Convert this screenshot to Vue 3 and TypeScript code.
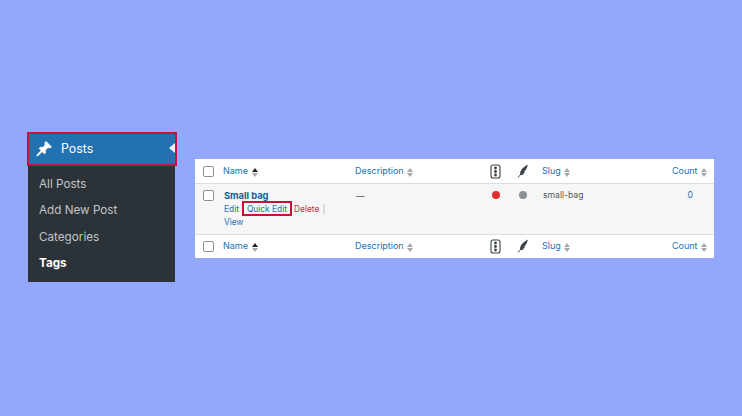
<script setup lang="ts">
const menu = [
  { label: 'All Posts', current: false },
  { label: 'Add New Post', current: false },
  { label: 'Categories', current: false },
  { label: 'Tags', current: true },
]
const headRows = ['top', 'bottom']
</script>

<template>
  <div class="page">
    <aside class="side">
      <div class="posts">
        <svg class="pin" viewBox="0 0 20 20" width="18" height="18">
          <path fill="#fff" d="M10.44 3.02l1.82-1.82 6.36 6.35-1.83 1.82c-1.05-.68-2.48-.57-3.41.36l-.75.75c-.92.93-1.04 2.35-.35 3.41l-1.83 1.82-2.41-2.41-2.8 2.79c-.42.42-3.38 2.71-3.8 2.29s1.86-3.39 2.28-3.81l2.79-2.79L4.1 9.36l1.83-1.82c1.05.69 2.48.57 3.4-.36l.75-.75c.93-.92 1.05-2.35.36-3.41z" />
        </svg>
        <span class="posts-label">Posts</span>
        <span class="notch"></span>
      </div>
      <ul class="sub">
        <li v-for="m in menu" :key="m.label" :class="{ current: m.current }">{{ m.label }}</li>
      </ul>
    </aside>

    <div class="table">
      <template v-for="(h, i) in headRows" :key="h">
        <div class="row head" :class="h">
          <span class="box"></span>
          <span class="col-name link">Name <i class="sort"><b class="up dark"></b><b class="down"></b></i></span>
          <span class="col-desc link">Description <i class="sort"><b class="up"></b><b class="down"></b></i></span>
          <span class="col-light">
            <svg viewBox="0 0 11 15" width="11" height="15">
              <rect x="1" y="1" width="9" height="13" rx="2" fill="none" stroke="#3c4348" stroke-width="1.1" />
              <circle cx="5.5" cy="4" r="1.4" fill="#3c4348" />
              <circle cx="5.5" cy="7.5" r="1.4" fill="#3c4348" />
              <circle cx="5.5" cy="11" r="1.4" fill="#3c4348" />
            </svg>
          </span>
          <span class="col-leaf">
            <svg viewBox="0 0 12 14" width="12" height="14">
              <path fill="#3c4348" d="M10.8.4C8.2 2 5.6 3.6 4.2 6 3.3 7.6 3 9.2 3.1 10.4L.8 13.3l.5.4 2.4-2.8c1.4.1 2.9-.5 3.8-1.5-.6.1-1.2 0-1.7-.2.9-.1 1.8-.6 2.4-1.3-.5 0-1-.1-1.3-.3.8-.3 1.4-.9 1.8-1.6C9.6 4.3 10.6 2.4 10.8.4z" />
            </svg>
          </span>
          <span class="col-slug link">Slug <i class="sort"><b class="up"></b><b class="down"></b></i></span>
          <span class="col-count link">Count <i class="sort"><b class="up"></b><b class="down"></b></i></span>
        </div>
        <div v-if="i === 0" class="row body">
          <span class="box"></span>
          <div class="col-name">
            <div class="title">Small bag</div>
            <div class="actions">
              <span class="link">Edit</span>
              <span class="quick link">Quick Edit</span>
              <span class="del">Delete</span>
              <span class="bar">|</span>
              <span class="link view">View</span>
            </div>
          </div>
          <span class="col-desc dash">—</span>
          <span class="col-light"><span class="dot red"></span></span>
          <span class="col-leaf"><span class="dot grey"></span></span>
          <span class="col-slug slug">small-bag</span>
          <span class="col-count link num">0</span>
        </div>
      </template>
    </div>
  </div>
</template>

<style>
html, body { margin: 0; background: #94a8fb; }
</style>

<style scoped>
.page {
  width: 742px;
  height: 416px;
  box-sizing: border-box;
  background: #94a8fb;
  display: flex;
  align-items: flex-start;
  gap: 20px;
  padding: 133px 28px 0;
  font-family: Inter, "Liberation Sans", sans-serif;
}
.side { width: 147px; flex: none; background: #2c3338; }
.posts {
  height: 34px;
  margin: -1px -2px -1px -1px;
  box-sizing: border-box;
  border: 2px solid #c8103a;
  background: #2271b1;
  display: flex;
  align-items: center;
  padding-left: 6px;
  position: relative;
  color: #fff;
}
.pin { flex: none; }
.posts-label { margin: 0 0 1px 8px; font-size: 12.4px; font-weight: 400; }
.notch {
  position: absolute;
  right: 0;
  top: 9px;
  border: 5.5px solid transparent;
  border-right: 6px solid #f0f0f1;
  border-left-width: 0;
}
.sub { list-style: none; margin: 0; padding: 6px 0 6px 11px; }
.sub li {
  height: 26.3px;
  line-height: 26.3px;
  font-size: 11.7px;
  color: #c3c4c7;
}
.sub li.current { color: #fff; font-weight: 700; }

.table {
  width: 519px;
  flex: none;
  margin-top: 26px;
  background: #fff;
  font-size: 9px;
  color: #50575e;
}
.row {
  display: grid;
  grid-template-columns: 28px 132px 135px 27px 25px 100px 65px;
  align-items: center;
}
.head { height: 24px; }
.head.bottom { height: 24px; border-top: 1px solid #dcdcde; box-sizing: border-box; padding-bottom: 1px; }
.head.top { border-bottom: 1px solid #dcdcde; box-sizing: content-box; height: 24px; }
.body {
  height: 50px;
  background: #f6f6f6;
  align-items: start;
  padding-top: 5px;
  box-sizing: border-box;
}
.box {
  width: 9px;
  height: 9px;
  margin-left: 8px;
  border: 1px solid #8c8f94;
  border-radius: 2px;
  background: #fff;
}
.body .box { margin-top: 1px; }
.link { color: #2271b1; }
.col-count { text-align: right; }
.sort {
  display: inline-flex;
  flex-direction: column;
  gap: 1px;
  margin-left: 1px;
  vertical-align: middle;
}
.sort b {
  display: block;
  border-left: 3px solid transparent;
  border-right: 3px solid transparent;
}
.up { border-bottom: 4px solid #a7aaad; }
.up.dark { border-bottom-color: #1d2327; }
.down { border-top: 4px solid #a7aaad; }
.col-light, .col-leaf { display: flex; justify-content: flex-start; }
.col-light svg { display: block; }
.title { font-weight: 700; color: #135e96; font-size: 9.3px; line-height: 13px; }
.body .col-name { width: 112px; padding-left: 1px; }
.actions { font-size: 8.4px; line-height: 12.5px; margin-top: 1px; }
.quick {
  border: 2px solid #c8103a;
  padding: 1px 3px 0;
  margin: 0 2px 0 3px;
}
.del { color: #c0303a; }
.bar { color: #a7aaad; margin-left: 3px; }
.view { display: block; }
.dash { font-size: 8.5px; line-height: 14px; padding-left: 1px; }
.dot { display: block; width: 8px; height: 8px; border-radius: 50%; margin-left: 2px; margin-top: 2px; }
.red { background: #e22b2b; }
.grey { background: #8c8f94; margin-left: 2px; }
.slug { font-size: 8.6px; line-height: 13px; padding-left: 1px; }
.num { line-height: 13px; padding-right: 14px; font-size: 8.6px; }
</style>
